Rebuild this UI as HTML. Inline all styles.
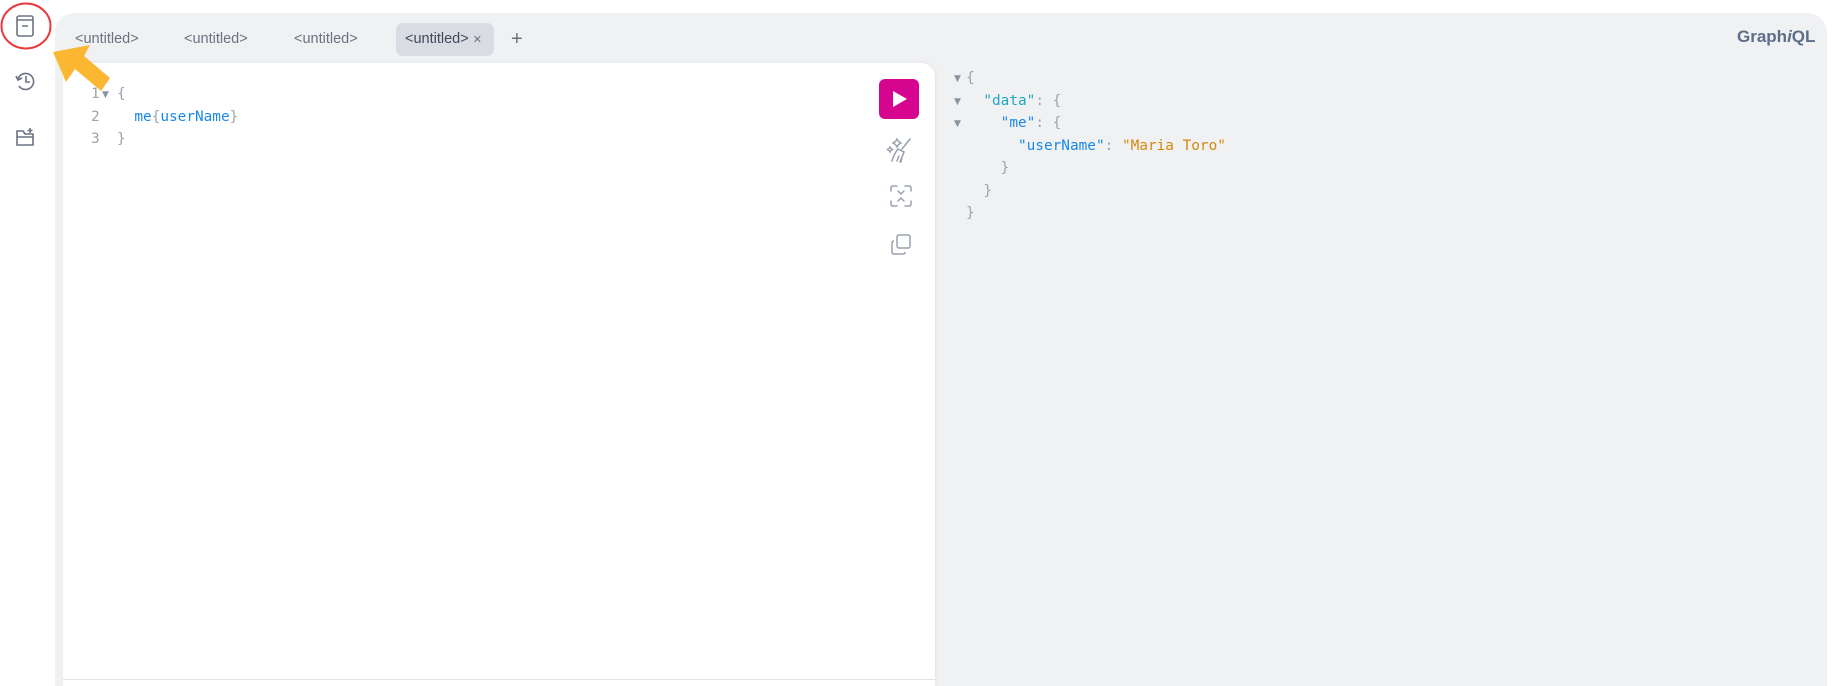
<!DOCTYPE html>
<html style="width:1839px;height:686px;overflow:hidden"><head><meta charset="utf-8"><style>
*{margin:0;padding:0;box-sizing:border-box}
body{width:1839px;height:686px;background:#fff;position:relative;overflow:hidden;font-family:"Liberation Sans",sans-serif}
.panel{position:absolute;left:55px;top:13px;width:1772px;height:673px;background:#f0f1f3;border-radius:20px 20px 0 0}
.tab{position:absolute;top:22px;height:35px;line-height:35px;font-size:14.5px;color:#6b7280;padding:0 9px}
.editor{position:absolute;left:63px;top:63px;width:872px;height:623px;background:#fff;border-radius:14px 14px 0 0;box-shadow:1px 0 4px rgba(0,0,0,.06)}
pre{font-family:"DejaVu Sans Mono","Liberation Mono",monospace;font-size:14.4px;line-height:22.5px;position:absolute;white-space:pre}
.g{color:#9aa3b1}.b{color:#1a88e8}.c{color:#20a7bf}.o{color:#d4890e}.n{color:#9aa3b1}
.tri{position:absolute;font-size:9px;color:#8a93a2;line-height:10px;font-family:"DejaVu Sans",sans-serif}
svg{position:absolute}
</style></head><body>
<div class="panel"></div>
<div class="tab" style="left:66px">&lt;untitled&gt;</div>
<div class="tab" style="left:175px">&lt;untitled&gt;</div>
<div class="tab" style="left:285px">&lt;untitled&gt;</div>
<div class="tab" style="left:396px;top:23px;width:98px;height:33px;line-height:33px;background:#d9dce2;border-radius:7px;color:#3f4a5c">&lt;untitled&gt; <span style="font-size:11px;color:#6b7280">✕</span></div>
<div style="position:absolute;left:511px;top:22px;line-height:35px;font-size:20px;color:#6b7280">+</div>
<div style="position:absolute;left:1737px;top:27px;font-size:17px;font-weight:bold;color:#5f6e88">Graph<i>i</i>QL</div>
<div class="editor"></div>
<div style="position:absolute;left:63px;top:679px;width:872px;height:1px;background:#e1e3e7"></div>
<pre style="left:91px;top:83px" class="n">1
2
3</pre>
<div class="tri" style="left:102px;top:90px">▼</div>
<pre style="left:117px;top:83px"><span class="g">{</span>
  <span class="b">me</span><span class="g">{</span><span class="b">userName</span><span class="g">}</span>
<span class="g">}</span></pre>
<div style="position:absolute;left:879px;top:79px;width:40px;height:40px;background:#d60590;border-radius:6px"></div>
<svg style="left:879px;top:79px" width="40" height="40"><path d="M14 12 L28 20 L14 28 Z" fill="#fff"/></svg>
<svg style="left:886px;top:136px" width="28" height="28" fill="none" stroke="#9aa1ae" stroke-width="1.5" stroke-linecap="round"><path d="M24 3 L16 13 M12 13 L18 16 L14 26 M12 13 Q8 18 6 25 M13 20 L11 25 M16 21 L15 26"/><path d="M11 3 l1.5 2.5 2.5 1.5 -2.5 1.5 -1.5 2.5 -1.5 -2.5 -2.5 -1.5 2.5 -1.5z M4 11 l1 1.5 1.5 1 -1.5 1 -1 1.5 -1 -1.5 -1.5 -1 1.5 -1z"/></svg>
<svg style="left:889px;top:184px" width="24" height="24" fill="none" stroke="#9aa1ae" stroke-width="1.5" stroke-linecap="round"><path d="M2 7 V4 Q2 2 4 2 H8 M16 2 H20 Q22 2 22 4 V7 M2 17 V20 Q2 22 4 22 H8 M16 22 H20 Q22 22 22 20 V17 M9 7 L12 10 L15 7 M9 17 L12 14 L15 17"/></svg>
<svg style="left:889px;top:233px" width="24" height="24" fill="none" stroke="#9aa1ae" stroke-width="1.5"><rect x="8" y="2" width="13" height="13" rx="2"/><path d="M5 8 Q3 8 3 10 V19 Q3 21 5 21 H14 Q16 21 16 19"/></svg>
<div class="tri" style="left:954px;top:74px">▼</div>
<div class="tri" style="left:954px;top:97px">▼</div>
<div class="tri" style="left:954px;top:119px">▼</div>
<pre style="left:966px;top:67px"><span class="g">{</span>
  <span class="c">"data"</span><span class="g">: {</span>
    <span class="b">"me"</span><span class="g">: {</span>
      <span class="b">"userName"</span><span class="g">: </span><span class="o">"Maria Toro"</span>
    <span class="g">}</span>
  <span class="g">}</span>
<span class="g">}</span></pre>
<svg style="left:0;top:0" width="130" height="160">
<ellipse cx="26" cy="26" rx="24.5" ry="22.5" fill="none" stroke="#e8383d" stroke-width="2"/>
<g fill="none" stroke="#6b7384" stroke-width="1.6"><rect x="17" y="16" width="16" height="20" rx="2"/><path d="M17 20 H33 M22 26 H28"/>
<path d="M18 79 A8 8 0 1 1 19 86 M16 76 L18 80 L22 78 M26 76 V82 L30 82"/>
<path d="M17 131 H23 L25 134 H33 V145 H17 Z M17 137 H33 M30 128 V133 M27.5 130.5 H32.5"/></g>
<path d="M53 52 L90 45 L84 56 L110 78 L101 91 L75 69 L66 82 Z" fill="#fbb731"/>
</svg>
</body></html>
